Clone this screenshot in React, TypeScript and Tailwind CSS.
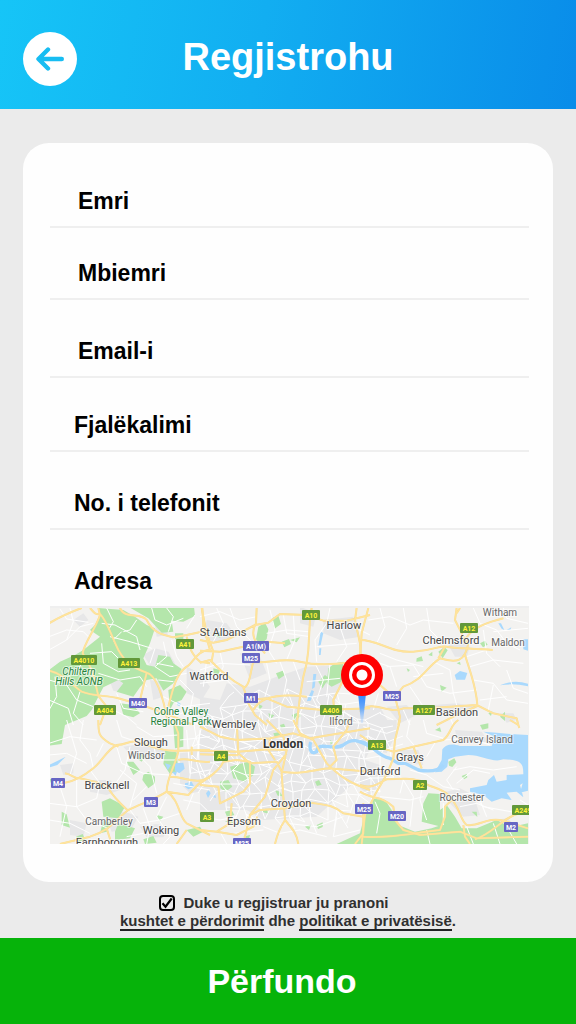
import React from "react";

type Tile = {
  x: number;
  y: number;
  urban?: string;
  green: string;
  water: string;
  river?: string;
  minor: string;
  major: string;
};

// Each tile is drawn on a 3x grid; x and y are its origin on the map.
const tiles: Tile[] = [
  {
    x: -10,
    y: -8,
    urban:
      "M210 245l30-15 35 25-20 25-35-8zM310 165l35-20 40 10 20 35-25 30-45-15zM345 75l25 5 15 25-35 5zM100 60l30-20 15 20-25 20zM330 240l30 5 10 45-30 10zM440 200l40 20 30 40-25 40-45-20z",
    green:
      "M175 24L180 50 165 75 150 90 180 110 130 150 105 165 60 185 27 210 27 437 65 432 75 375 140 348 155 330 175 290 190 262 235 240 250 250 230 275 280 290 300 262 320 240 350 235 370 272 400 250 425 207 400 190 390 170 355 165 345 200 320 195 310 175 330 130 345 85 320 75 285 50 250 30ZM265 20L462 20 465 48 430 65 395 62 400 95 365 98 325 55ZM385 270L420 255 440 275 425 300 400 310 390 330ZM400 375l30 5 0 60-25 5zM405 100l25 0 0 18-25 0zM240 310l40 5 20 25-20 12-30-8z",
    water: "M412 305l10 6-2 8-8-3z",
    minor:
      "M27 150L80 120 120 80 160 70M27 110L80 90 130 95 150 115M90 24L100 65 80 120M60 27l20 30 65 10M200 24L220 65 205 90M245 95L220 120 230 140M185 70L225 75 290 110 300 150M210 110L270 125 335 145M185 130L190 190 235 215 270 210M150 160L215 155 240 180M130 185L100 225M27 240L80 255 110 300 160 320M27 300L85 325 100 375M45 230L50 290 27 330M120 275L100 340 130 375M175 220L240 240 300 230 320 260M230 280L250 325 310 335M200 320L260 350 290 375M335 24L345 60 380 75 430 55M380 24L400 50 385 95M345 145L330 190M370 125L380 170 345 200 390 230 440 220M395 120L410 170 430 200M350 190L400 200M355 240L400 245M370 290L430 320 510 310M420 240L460 280 450 330 400 350M465 45L440 85M290 60L270 90 250 95",
    major:
      "M27 70C60 50 95 35 125 24M150 24C160 35 165 45 180 42 200 60 215 110 235 150 260 195 285 205 320 218 350 225 370 290 385 375M175 24L180 45C165 90 132 130 128 160 150 190 160 220 175 288L200 320 180 375M27 212C70 220 100 260 125 275 160 290 200 285 235 295 290 310 350 330 400 350L460 375M240 24C255 60 300 35 320 60 340 100 370 105 400 112L440 105 510 90M487 24L490 80 510 150M440 110C450 150 460 170 480 185L510 190M510 150C470 150 460 190 440 200 410 220 400 260 385 320M320 218L300 300",
  },
  {
    x: 150,
    y: -8,
    urban:
      "M20 60l60 10 30 40-60 20-40-20zM370 60l90-10 20 60-60 10-50-20zM300 20l50 20-10 40-40-10zM320 200L430 195 430 240 400 320 510 330 510 375 0 375 0 290 60 300 80 250 150 260 230 230ZM120 160l60 10 20 50-50 20z",
    green:
      "M175 80l20-12 10 20-5 30-20 15-12-15zM215 55l20-8 8 25-20 15zM245 125l22-8 6 15-20 10zM270 120l30-8-10 15zM385 205l20-15 25-5-5 60-30 15-15-10zM228 220l20-8 8 12-20 14zM40 205l20 5-5 15-15-5zM355 245l20-20 12 10-20 30zM50 95l18 6-8 12-14-6zM275 345l22-8 6 12-20 10zM170 310l18 8-10 14zM420 360l22-5-10 20zM205 340l18 6-12 12z",
    water: "M362 95l8 4-8 36-7 2zM340 222l9 0-5 40-8 5zM335 270l7 4-10 28-12 2zM358 145l6 0-2 20-5 0zM380 66l10-6-4 20-6 10z",
    river: "",
    minor:
      "M0 50L60 35 120 60 170 50M50 24L70 70 40 125M90 24L110 80 160 130M210 30L225 90 205 150 230 190M250 45L260 100 330 110M280 45L285 120 260 180M200 100L260 90 325 95M390 24L380 70 345 120 350 185M420 80L440 140 410 185M450 75L510 105M350 140L470 130M0 210L60 190 150 195M60 155L70 200 50 240M200 190L210 240 195 290M240 185L260 240 250 290M280 185L300 240M0 250L80 240 140 300M20 180L10 260M345 190L370 240 350 300 380 340M320 245L420 235M390 190L380 290",
    major:
      "M0 152L60 155 130 140 200 125 255 130M0 120L40 128 80 120 165 75 205 68 240 42 320 45 370 62 440 62 510 45M170 24L168 70C145 110 175 135 195 160M160 185C150 220 150 260 128 265M0 188L30 180C60 210 90 240 130 260L145 310 165 345 200 375M5 24L20 100 40 155 35 185M155 185C200 195 240 170 300 185S430 190 510 180M335 24L330 60 325 150 320 190 310 230 300 290 290 375M470 24L465 60 480 130 483 190M430 240L400 300 405 375M160 330C180 290 240 280 320 290M140 300L200 295 260 320 370 330 510 325",
  },
  {
    x: 310,
    y: -8,
    urban: "M265 135l40-15 25 20-10 30-35 0zM220 315l70-5 60 10-20 25-80 0zM80 320l60-5 30 30-50 25zM420 340l40 0 10 20-30 8zM0 310l60 10 30 55-90 0z",
    green:
      "M235 155l18-14 10 10-15 24zM170 175l15-6 4 14-20 2zM205 165l12-10 0 14zM360 130l15-8 8 12-14 8zM240 255l20 8-16 12zM420 350l15-15 0 28zM385 340l12-6-4 14zM290 190l10-5 2 10zM140 205l10 5-6 6z",
    water: "M284 225l16-12 22 6-7 20-26 0zM490 118l14 0 0 34-14-4zM420 256q40-18 84-5l0 8q-45-10-84-3zM415 70l8 0 10 20-8-4zM440 90l14-8-3 8z",
    minor:
      "M25 60L90 50 150 75 190 60 280 70M60 24L75 80 50 130M130 24L140 85 110 135M200 24L210 90 250 130M340 24L360 70 410 90 440 130 480 150M370 90L380 160 420 200M60 160L110 180 190 200M30 180L90 200 110 260M80 200L160 195 200 260 270 280 350 270M150 260L190 320M220 185L270 210 280 280 290 315M330 200L400 180 490 190M340 240L400 250 440 300 504 310M400 255L385 330M360 300L440 290M440 210L460 265 504 280M320 170L380 150M130 330L150 375M400 95L504 85M430 24L440 55 504 70M250 220L160 230M55 280L40 330M60 340L100 360M260 330L280 375",
    major:
      "M25 24L5 100 0 180M0 120C60 120 90 160 160 155S240 135 260 140 340 145 398 150M290 24L285 60 310 110 320 130M430 55C390 65 340 80 318 115M325 130C315 185 290 190 240 175 200 200 190 240 130 260L105 290 120 350 115 375M255 140L235 175M315 165C325 200 350 260 352 318M0 335C40 295 80 345 130 325L200 325 350 315 400 340 470 355 475 375M230 375L300 340 352 318M60 255L100 290M300 24L290 40",
  },
  {
    x: -10,
    y: 112,
    urban: "M250 80l60-10 70 20-10 30-90-5zM150 180l60 0 30 30-40 15-50-10zM195 285l60-10 40 15-20 35-60 10zM90 300l50 10-10 40-40-5zM300 320l50-8 40 10-20 30-50 0zM420 100l90-10 0 120-60 10-30-30zM60 135l40-5 0 30-30 5z",
    green:
      "M185 245l25-10 20 10 25 15-20 35-45-5zM310 165l15-10 20 15 0 20-20 15-18-25zM375 92l35 5 5 55-25 10-20-30zM235 310l50 15-15 30-45 5 0-25zM65 275l15 8 10 40-25-8zM190 300l25 10-15 25-20 5zM27 175l15 5-5 20zM440 330l40-10 10 15-30 15zM260 125l20 0 20 25-20 15zM350 285l20 5-12 15zM108 350l20-8 8 18-22 6zM310 358l30-10 10 20-35 4zM300 100l15 10-10 15-12-8z",
    water: "M27 135q25-12 50-25l-25 25-25 8zM435 190l20-5 8 15-18 8-10-8zM405 130l25-2 4 18-16 14-13-8zM375 130l18 5-10 16zM395 155l16 0-4 12z",
    minor:
      "M27 70L90 50 170 60M80 0L95 50 110 100 90 165M27 105L80 100 140 130M130 0L120 60 150 100 160 145M190 70L170 110M230 80L245 130 310 160 390 165M270 80L255 150 220 200M150 150L180 190 170 235 110 260 27 250M60 200L80 260 60 350M27 300L90 310 150 340M110 180L110 260 140 300 205 325M240 150L290 190 270 260M300 110L330 140 350 220M320 200L280 240M230 0L245 50 290 65M290 20L340 50 415 45M340 70L350 120 410 120M270 270L300 310 360 300 420 280M310 265L330 320 320 372M380 230L350 290 390 350 370 372M260 350L310 340M430 240L480 250 510 280M440 30L450 160 510 150M480 30L470 130 490 200M420 60L510 50M400 190L510 210M460 220L440 270",
    major:
      "M75 160C100 165 100 175 120 175 170 185 195 195 205 205 220 230 240 250 262 270M75 188C100 185 135 165 160 145 190 120 200 90 230 75 260 75 270 60 290 65 330 75 360 95 415 92L510 90M175 0C175 40 175 50 210 70L235 80M400 0L415 40 415 92C410 130 380 170 380 215 350 235 320 245 265 270 230 295 215 330 150 350L60 372M380 215C420 240 415 290 440 310L510 345M380 215L445 225C470 200 480 180 510 172M200 325L215 372M410 372L440 330M415 120C440 110 470 130 510 125M455 80L455 105M390 170C430 170 460 190 490 180",
  },
  {
    x: 150,
    y: 112,
    urban: "M0 0L510 0 510 90 460 190 350 290 190 300 140 270 0 270Z",
    green:
      "M90 140l55-15 20 15-5 25-25 20-35-10zM60 185l25-5 12 20-20 15-16-10zM75 275l20-5 8 15-22 5zM185 275l15-8 5 14zM345 185l12-5 8 14-14 4zM350 315l18-8 0 14-14 6zM130 350l20-5-5 20zM225 210l15 5 8 14-15-2zM75 305l18-8 8 12zM390 60l10 6-8 8zM240 15l12-4 4 10-12 4zM220 40l20-4 0 10-16 4zM315 320l18-6-6 16z",
    water: "M18 220l8-10 6 10-8 14zM36 230l10-6 2 10z",
    river: "M332 66C326 90 335 105 350 95 355 60 400 95 430 75 460 50 480 65 510 80",
    minor: "M260 310L350 320 430 290M190 320L240 340 300 330 380 350M0 290L60 300 110 290M60 335L80 372M330 290L350 340M410 290L400 350 480 330M100 340L190 330M430 200L460 250 440 310",
    major:
      "M0 92L115 95 200 88 260 90M0 103L115 106 M0 190C30 170 60 150 70 125L110 120 150 125 150 190 130 215 60 250 55 200 0 195M200 0L250 50 260 90 245 160 255 300C235 330 230 350 225 372M110 0L115 100 150 130 230 125 245 155C300 165 340 150 385 145L510 155M260 100L220 150 195 230 150 285 130 372M150 285L180 270 255 265 330 248C380 255 400 255 430 280L490 290M0 330L50 335 110 345 160 320 172 290M255 300C280 330 290 340 295 372M490 250L490 340 465 372M280 0L300 40 340 60 380 130C420 170 450 190 510 210M385 145L410 120 400 80 440 30 450 0M210 55L280 40 330 55 420 40 510 25M210 55L205 90 225 120M95 250L90 310 50 335M0 20L60 50 110 60 210 55",
  },
  {
    x: 310,
    y: 112,
    urban: "M0 0l110 0 0 40-30 60-80-20zM0 115l60 20 30 30-60 60-30-20zM240 220l60-15 40 20 20 60-50 5zM285 30l80 5 20 30-90 8zM115 90l60 0 15 45-50-5zM395 300l50-5 20 30-50 5z",
    green:
      "M-70 372L0 340 15 280 40 236 75 240 95 270 115 315 165 335 215 325 235 318 185 305 190 250 205 220 240 222 240 270 260 255 285 290 305 325 350 325 410 300 450 322 504 310 504 372ZM265 125l18-10 6 12-12 14-10-4zM360 15l25-5 0 15-18 4zM305 168l15-6 2 10-10 6zM335 275l15 0 2 16zM225 30l15-8 4 14z",
    water:
      "M245 120L247 88C255 75 275 68 300 78L395 78 400 62 400 48 370 35 410 38 450 42 504 45 504 212 480 218 488 190 480 195 490 232 470 215 440 218 455 240 425 235 395 245 370 225 330 215 330 205 380 195 385 180 402 165 410 185 440 180 440 165 490 163C490 130 485 120 430 118 400 130 365 105 325 105L285 110 265 118 262 140 245 155 225 157Z",
    river: "M0 65C40 70 45 105 90 115L115 130 135 130 175 150C205 155 235 155 250 135",
    minor:
      "M10 20L80 40 110 30M150 0L140 50 170 85M190 0L200 40 250 55M200 110L230 60M250 60L330 55 390 75M100 150L130 180 120 220M150 150L200 165 250 200 300 210M190 180L180 240 200 300M60 230L150 240 190 230M130 180L160 230 150 320M270 225L330 220 370 260 480 280M300 260L350 250 400 270M290 190L340 150 390 160M280 150L330 140 400 150 470 140M280 210L260 180 290 140M320 320L340 372M400 310L420 372M45 245L60 280 50 340M200 330L210 372M250 315L250 250M440 320L470 372M380 290L360 240M480 240L504 255",
    major:
      "M0 45L50 80 100 95M120 0L105 60 100 115 90 140C75 180 50 210 40 235L15 285 5 372M100 95L160 80 185 145M160 80L250 60C275 40 270 15 295 0M0 195C40 210 60 185 80 178 130 175 150 175 180 182 210 205 240 200 265 225 300 260 300 300 320 315 360 320 380 290 430 302L504 325M0 215C40 240 60 225 100 260L105 300 130 330 180 345 300 335 350 355 504 350M0 350C100 355 150 340 240 330L255 290 255 260 275 240M345 358C400 340 430 290 480 280M450 0L475 15 478 24M310 315L315 350 330 372",
  },
];

// Street network around the city: a jittered lattice thinned toward its rim.
function streetMesh(): string {
  const jitter = (n: number) => {
    const v = Math.sin(n * 127.1) * 43758.5453;
    return (v - Math.floor(v) - 0.5) * 10;
  };
  const point = (c: number, r: number): [number, number] => [
    Math.round(142 + c * 11 + jitter(c * 31 + r)),
    Math.round(86 + r * 11 + jitter(r * 57 + c * 3 + 9)),
  ];
  const parts: string[] = [];
  for (let c = 0; c < 19; c++) {
    for (let r = 0; r < 12; r++) {
      const [x, y] = point(c, r);
      if (Math.hypot((x - 236) / 105, (y - 144) / 68) > 1) continue;
      const [rx, ry] = point(c + 1, r);
      const [dx, dy] = point(c, r + 1);
      parts.push(`M${rx} ${ry}L${x} ${y}L${dx} ${dy}`);
      if ((c * 7 + r * 3) % 4 === 0) {
        const [ex, ey] = point(c + 1, r + 1);
        parts.push(`M${x} ${y}L${ex} ${ey}`);
      }
    }
  }
  return parts.join("");
}
const streets = streetMesh();

type Place = [name: string, x: number, y: number, kind?: "minor" | "city" | "park" | "parkItalic"];
const places: Place[] = [
  ["St Albans", 173, 28],
  ["Harlow", 294, 21],
  ["Witham", 450, 8, "minor"],
  ["Chelmsford", 401, 36],
  ["Maldon", 458, 38, "minor"],
  ["Watford", 159, 72],
  ["Chiltern", 29, 67, "parkItalic"],
  ["Hills AONB", 29, 77, "parkItalic"],
  ["Colne Valley", 131, 107, "park"],
  ["Regional Park", 131, 117, "park"],
  ["Wembley", 184, 120],
  ["Basildon", 407, 108],
  ["Ilford", 291, 117, "minor"],
  ["Slough", 101, 138],
  ["Windsor", 96, 151, "minor"],
  ["London", 233, 140, "city"],
  ["Canvey Island", 432, 135, "minor"],
  ["Grays", 360, 153],
  ["Dartford", 330, 167],
  ["Bracknell", 57, 181],
  ["Camberley", 59, 217, "minor"],
  ["Woking", 111, 226],
  ["Farnborough", 57, 238],
  ["Epsom", 194, 217],
  ["Croydon", 241, 199],
  ["Rochester", 412, 193, "minor"],
];
const placeStyle = {
  normal: "fill-[#454545] text-[11px]",
  minor: "fill-[#666666] text-[10px]",
  city: "fill-[#333333] text-[12px] font-bold",
  park: "fill-[#26823c] text-[10px]",
  parkItalic: "fill-[#26823c] text-[10px] italic",
};

const badges: [string, number, number][] = [
  ["A10", 261, 7], ["A12", 419, 20], ["A41", 135, 36], ["A1(M)", 206, 38],
  ["M25", 201, 50], ["A4010", 34, 52], ["A413", 79, 55], ["M40", 88, 95],
  ["A404", 55, 102], ["M1", 201, 90], ["M25", 342, 88], ["A406", 281, 102],
  ["A127", 374, 102], ["M4", 8, 175], ["M3", 101, 194], ["A3", 157, 209],
  ["A4", 171, 148], ["A13", 327, 137], ["A2", 370, 177], ["M25", 314, 201],
  ["M20", 347, 208], ["M2", 461, 219], ["A249", 473, 202], ["M25", 192, 235],
];

function LondonMap() {
  const layer = (render: (t: Tile) => React.ReactNode) =>
    tiles.map((t, i) => (
      <g key={i} transform={`translate(${t.x} ${t.y}) scale(0.33333)`}>
        {render(t)}
      </g>
    ));
  return (
    <svg viewBox="0 0 479 236" role="img" aria-label="London" className="block w-full bg-[#f3f2f0]">
      <defs>
        <linearGradient id="beam" x1="0" y1="0" x2="0" y2="1">
          <stop offset="0" stopColor="#2f86fb" />
          <stop offset="0.5" stopColor="#66a8fb" />
          <stop offset="1" stopColor="#b5d5fc" stopOpacity="0.4" />
        </linearGradient>
      </defs>
      {layer((t) => <path d={t.urban} fill="#e7e7e8" />)}
      {layer((t) => <path d={t.green} fill="#b4e6ab" />)}
      {layer((t) => <path d={t.water} fill="#a9d9fd" />)}
      {layer((t) => <path d={t.minor} fill="none" stroke="#ffffff" strokeWidth="3" strokeLinejoin="round" />)}
      <path d={streets} fill="none" stroke="#ffffff" strokeWidth="1" />
      {layer((t) => <path d={t.river} fill="none" stroke="#a5d7fd" strokeWidth="10" />)}
      {layer((t) => <path d={t.major} fill="none" stroke="#f8dc98" strokeWidth="6" strokeLinejoin="round" />)}
      {layer((t) => <path d={t.major} fill="none" stroke="#ffe49b" strokeWidth="4" strokeLinejoin="round" />)}
      <g textAnchor="middle" className="font-['Roboto',sans-serif]">
        {places.map(([name, x, y, kind]) => (
          <text
            key={name}
            x={x}
            y={y}
            stroke="#ffffff"
            strokeOpacity="0.6"
            strokeWidth="2"
            paintOrder="stroke"
            className={placeStyle[kind ?? "normal"]}
          >
            {name}
          </text>
        ))}
        {badges.map(([name, x, y], i) => {
          const w = name.length * 4 + 6;
          const motorway = name.includes("M");
          return (
            <g key={i}>
              <rect x={x - w / 2} y={y - 5} width={w} height="10" rx="1" fill={motorway ? "#6766c4" : "#62983a"} />
              <text x={x} y={y + 3} className={motorway ? "fill-white text-[7px] font-bold" : "fill-[#fff23a] text-[7px] font-bold"}>
                {name}
              </text>
            </g>
          );
        })}
      </g>
      <path d="M308 85h8l-3 30h-2z" fill="url(#beam)" />
      <circle cx="312" cy="67" r="21" fill="#ff0000" />
      <circle cx="312" cy="67" r="11.5" fill="none" stroke="#ffffff" strokeWidth="3" />
      <circle cx="312" cy="67" r="5.5" fill="#ffffff" />
    </svg>
  );
}

type FieldProps = { id: string; label: string; type?: string; className: string };
function Field({ id, label, type = "text", className }: FieldProps) {
  return (
    <div className={`flex items-end gap-4 border-b-2 border-[#efefef] pb-[13px] ${className}`}>
      <label htmlFor={id} className="text-[23px] leading-6 font-bold whitespace-nowrap text-black">
        {label}
      </label>
      <input id={id} name={id} type={type} className="h-6 min-w-0 flex-1 bg-transparent text-lg outline-none" />
    </div>
  );
}

export default function App() {
  return (
    <form
      onSubmit={(e) => e.preventDefault()}
      className="flex min-h-screen flex-col bg-[#ebebeb] font-['Arial_Rounded_MT_Bold','Liberation_Sans',sans-serif]"
    >
      <header className="grid grid-cols-[54px_1fr_54px] items-center bg-[linear-gradient(100deg,#16c5f7_0%,#12aef1_45%,#098ce9_100%)] px-[23px] pt-8 pb-[23px]">
        <button type="button" aria-label="Kthehu" className="flex size-[54px] items-center justify-center rounded-full bg-white">
          <svg viewBox="0 0 28 24" className="h-6 w-7" fill="none" stroke="#17bdf2" strokeWidth="4.4" strokeLinecap="round" strokeLinejoin="round">
            <path d="M12 2.5L2.5 12L12 21.5M3.5 12H25.8" />
          </svg>
        </button>
        <h1 className="pb-1 text-center text-[38px] leading-10 font-bold text-white">Regjistrohu</h1>
      </header>

      <main className="flex flex-1 flex-col px-[23px] pt-[34px]">
        <section className="rounded-[26px] bg-[#fefefe] pt-[13px] pr-6 pb-[38px] pl-[27px]">
          <Field id="emri" label="Emri" className="h-[72px] pl-7" />
          <Field id="mbiemri" label="Mbiemri" className="h-[72px] pl-7" />
          <Field id="email" label="Email-i" type="email" className="h-[78px] pl-7" />
          <Field id="fjalekalimi" label="Fjalëkalimi" type="password" className="h-[74px] pl-6" />
          <Field id="telefoni" label="No. i telefonit" type="tel" className="h-[78px] pl-6" />
          <Field id="adresa" label="Adresa" className="h-[78px] pl-6" />
          <LondonMap />
        </section>

        <div className="pt-3 pb-2 text-center text-[15px] leading-[18px] font-bold text-[#303030]">
          <label className="flex items-center justify-center gap-2 pr-7">
            <span className="grid size-4">
              <input
                type="checkbox"
                defaultChecked
                className="peer col-start-1 row-start-1 size-4 appearance-none rounded-sm border-2 border-black bg-transparent"
              />
              <svg
                viewBox="0 0 16 16"
                className="pointer-events-none invisible col-start-1 row-start-1 size-4 peer-checked:visible"
                fill="none"
                stroke="#000000"
                strokeWidth="2.2"
              >
                <path d="M3.5 8.3L6.5 11.7L12.7 3.5" />
              </svg>
            </span>
            Duke u regjistruar ju pranoni
          </label>
          <p>
            <a href="#kushtet" className="border-b-2 border-[#222222]">kushtet e përdorimit</a> dhe{" "}
            <a href="#privatesia" className="border-b-2 border-[#222222]">politikat e privatësisë</a>.
          </p>
        </div>
      </main>

      <button type="submit" className="h-[86px] w-full bg-[#06b30a] pr-3 text-[34px] font-bold text-white">
        Përfundo
      </button>
    </form>
  );
}
